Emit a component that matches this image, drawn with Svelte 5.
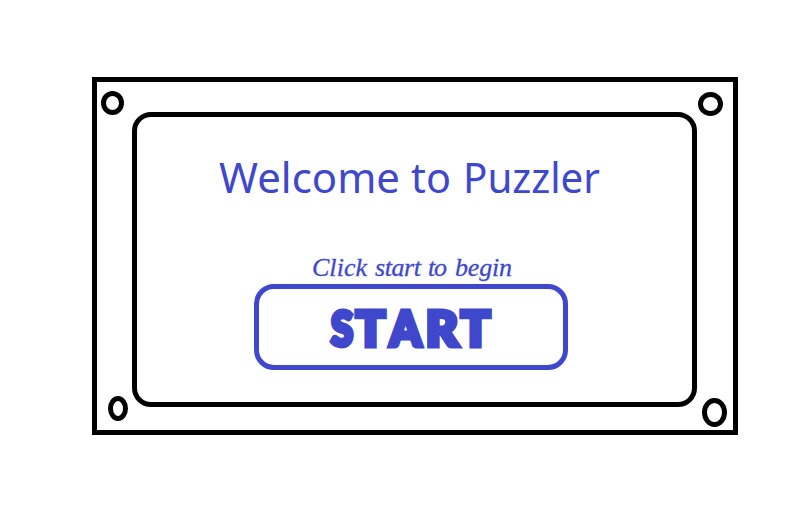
<script>
  const screws = [
    { name: 'top-left', w: 23, h: 24 },
    { name: 'top-right', w: 25, h: 24 },
    { name: 'bottom-left', w: 20, h: 25 },
    { name: 'bottom-right', w: 25, h: 29 }
  ];
</script>

<main>
  <section class="frame">
    {#each screws as s}
      <svg class="screw {s.name}" width={s.w} height={s.h}>
        <ellipse cx={s.w / 2} cy={s.h / 2} rx={s.w / 2 - 2.5} ry={s.h / 2 - 2.5} />
      </svg>
    {/each}
    <div class="panel">
      <h1>
        <svg width="382" height="48">
          <text y="38"><tspan x="0" textLength="181" lengthAdjust="spacingAndGlyphs">Welcome</tspan> <tspan x="192" textLength="40" lengthAdjust="spacingAndGlyphs">to</tspan> <tspan x="244" textLength="137" lengthAdjust="spacingAndGlyphs">Puzzler</tspan></text>
        </svg>
      </h1>
      <p>
        <svg width="200" height="32">
          <text y="24"><tspan x="0" textLength="55">Click</tspan> <tspan x="63" textLength="46">start</tspan> <tspan x="116" textLength="19">to</tspan> <tspan x="143" textLength="57">begin</tspan></text>
        </svg>
      </p>
      <button type="button">
        <svg width="164" height="50">
          <text y="43.5"><tspan x="2" textLength="22" lengthAdjust="spacingAndGlyphs">S</tspan><tspan x="27" textLength="29" lengthAdjust="spacingAndGlyphs">T</tspan><tspan x="61" textLength="31" lengthAdjust="spacingAndGlyphs">A</tspan><tspan x="97" textLength="32" lengthAdjust="spacingAndGlyphs">R</tspan><tspan x="132" textLength="29" lengthAdjust="spacingAndGlyphs">T</tspan></text>
        </svg>
      </button>
    </div>
  </section>
</main>

<style>
  :global(body) {
    background: #fff;
  }
  main {
    box-sizing: border-box;
    width: 799px;
    height: 516px;
    padding: 77px 61px 81px 92px;
  }
  .frame {
    position: relative;
    box-sizing: border-box;
    width: 646px;
    height: 358px;
    padding: 30px 36px 23px 35px;
    border: 5px solid #000;
  }
  .panel {
    box-sizing: border-box;
    display: flex;
    flex-direction: column;
    align-items: flex-start;
    width: 565px;
    height: 295px;
    padding-top: 38px;
    border: 5px solid #000;
    border-radius: 19px;
  }
  svg {
    display: block;
    overflow: visible;
  }
  text {
    fill: #3f48cc;
  }
  h1,
  p {
    margin: 0;
  }
  h1 {
    margin-left: 82px;
  }
  h1 text {
    font: 400 42px 'Noto Sans', sans-serif;
  }
  p {
    margin: 49px 0 0 175px;
  }
  p text {
    font: italic 400 26px 'Liberation Serif', serif;
    stroke: #3f48cc;
    stroke-width: 0.3px;
  }
  button {
    box-sizing: border-box;
    display: flex;
    justify-content: center;
    align-items: flex-start;
    width: 314px;
    height: 86px;
    margin-left: 117px;
    padding: 13px 0 0;
    border: 5px solid #3f48cc;
    border-radius: 20px;
    background: none;
    cursor: pointer;
  }
  button text {
    font: 900 48px Lato, sans-serif;
    stroke: #3f48cc;
    stroke-width: 5px;
  }
  .screw {
    position: absolute;
    fill: none;
    stroke: #000;
    stroke-width: 5px;
  }
  .top-left {
    left: 4px;
    top: 9px;
  }
  .top-right {
    right: 10px;
    top: 10px;
  }
  .bottom-left {
    left: 11px;
    bottom: 9px;
  }
  .bottom-right {
    right: 6px;
    bottom: 3px;
  }
</style>
